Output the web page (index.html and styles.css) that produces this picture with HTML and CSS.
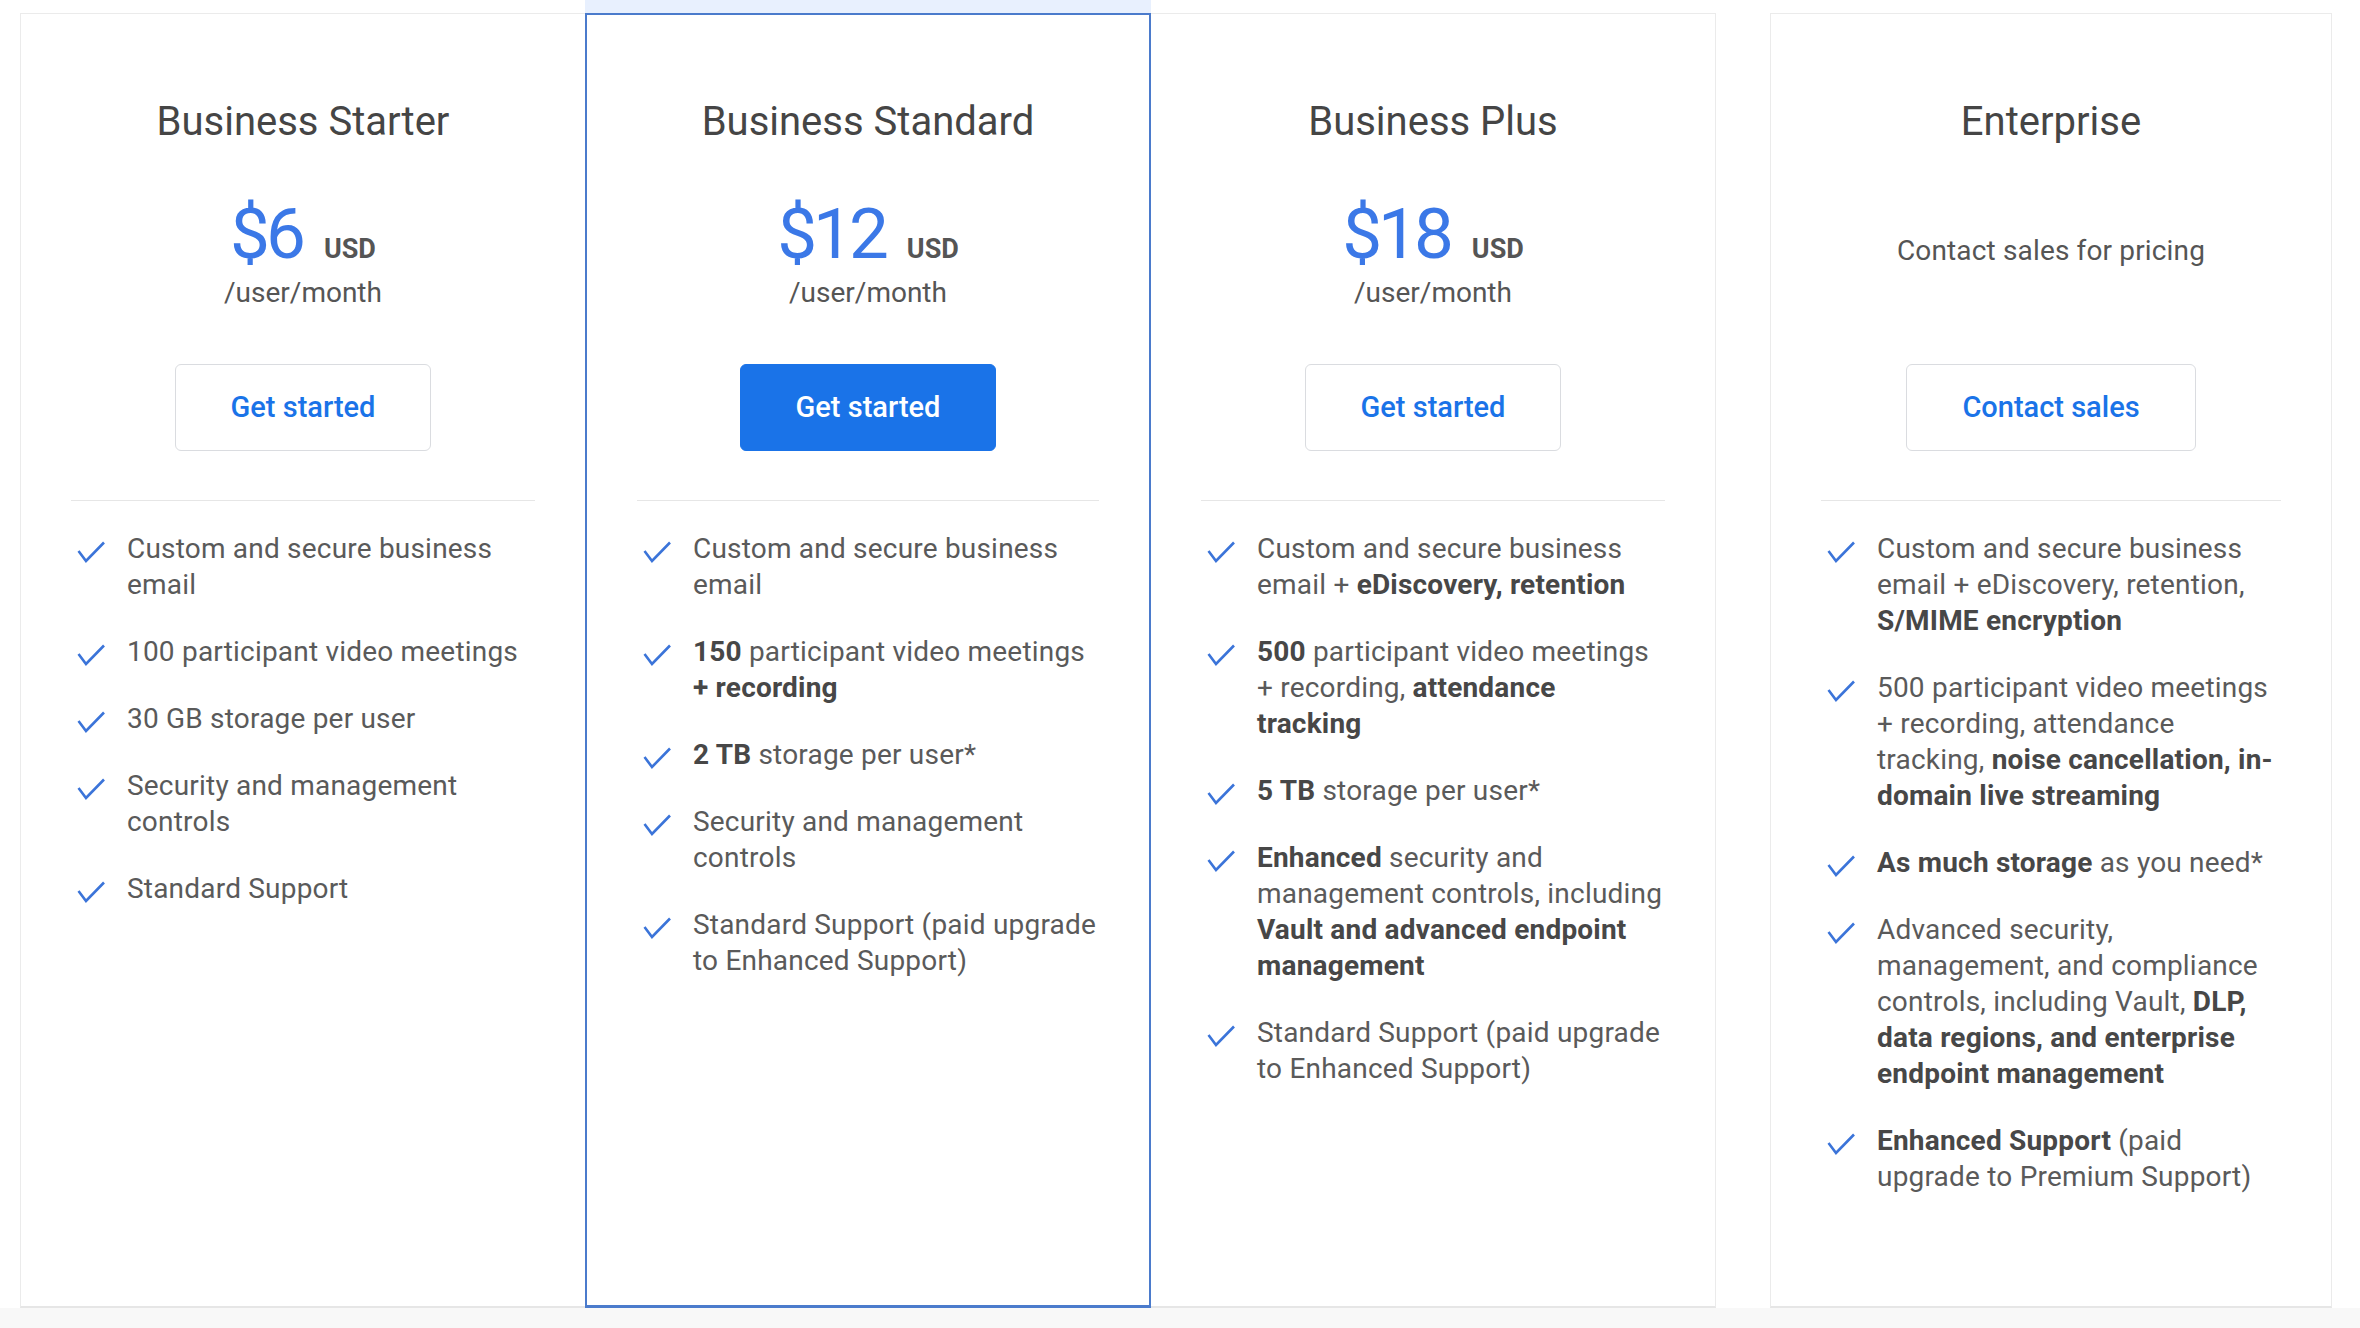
FILE: index.html
```html
<!DOCTYPE html>
<html lang="en">
<head>
  <meta charset="UTF-8">
  <title>Google Workspace plans</title>
  <link rel="stylesheet" href="styles.css">
</head>
<body>
  <div class="plans">

    <div class="plan">
      <div class="plan-head">
        <h3>Business Starter</h3>
        <div class="pricing">
          <div class="price"><span class="amount">$6</span><span class="currency">USD</span></div>
          <div class="per">/user/month</div>
        </div>
        <a class="btn" href="#">Get started</a>
      </div>
      <ul class="features">
        <li><svg class="check" viewBox="0 0 28 22"><polyline points="1.5,10 9,20 27,1.5"/></svg><span>Custom and secure business email</span></li>
        <li><svg class="check" viewBox="0 0 28 22"><polyline points="1.5,10 9,20 27,1.5"/></svg><span>100 participant video meetings</span></li>
        <li><svg class="check" viewBox="0 0 28 22"><polyline points="1.5,10 9,20 27,1.5"/></svg><span>30 GB storage per user</span></li>
        <li><svg class="check" viewBox="0 0 28 22"><polyline points="1.5,10 9,20 27,1.5"/></svg><span>Security and management controls</span></li>
        <li><svg class="check" viewBox="0 0 28 22"><polyline points="1.5,10 9,20 27,1.5"/></svg><span>Standard Support</span></li>
      </ul>
    </div>

    <div class="plan plan-featured">
      <div class="plan-head">
        <h3>Business Standard</h3>
        <div class="pricing">
          <div class="price"><span class="amount">$12</span><span class="currency">USD</span></div>
          <div class="per">/user/month</div>
        </div>
        <a class="btn btn-primary" href="#">Get started</a>
      </div>
      <ul class="features">
        <li><svg class="check" viewBox="0 0 28 22"><polyline points="1.5,10 9,20 27,1.5"/></svg><span>Custom and secure business email</span></li>
        <li><svg class="check" viewBox="0 0 28 22"><polyline points="1.5,10 9,20 27,1.5"/></svg><span><b>150</b> participant video meetings <b>+ recording</b></span></li>
        <li><svg class="check" viewBox="0 0 28 22"><polyline points="1.5,10 9,20 27,1.5"/></svg><span><b>2 TB</b> storage per user*</span></li>
        <li><svg class="check" viewBox="0 0 28 22"><polyline points="1.5,10 9,20 27,1.5"/></svg><span>Security and management controls</span></li>
        <li><svg class="check" viewBox="0 0 28 22"><polyline points="1.5,10 9,20 27,1.5"/></svg><span>Standard Support (paid upgrade to Enhanced Support)</span></li>
      </ul>
    </div>

    <div class="plan">
      <div class="plan-head">
        <h3>Business Plus</h3>
        <div class="pricing">
          <div class="price"><span class="amount">$18</span><span class="currency">USD</span></div>
          <div class="per">/user/month</div>
        </div>
        <a class="btn" href="#">Get started</a>
      </div>
      <ul class="features">
        <li><svg class="check" viewBox="0 0 28 22"><polyline points="1.5,10 9,20 27,1.5"/></svg><span>Custom and secure business email + <b>eDiscovery, retention</b></span></li>
        <li><svg class="check" viewBox="0 0 28 22"><polyline points="1.5,10 9,20 27,1.5"/></svg><span><b>500</b> participant video meetings + recording, <b>attendance tracking</b></span></li>
        <li><svg class="check" viewBox="0 0 28 22"><polyline points="1.5,10 9,20 27,1.5"/></svg><span><b>5 TB</b> storage per user*</span></li>
        <li><svg class="check" viewBox="0 0 28 22"><polyline points="1.5,10 9,20 27,1.5"/></svg><span><b>Enhanced</b> security and management controls, including <b>Vault and advanced endpoint management</b></span></li>
        <li><svg class="check" viewBox="0 0 28 22"><polyline points="1.5,10 9,20 27,1.5"/></svg><span>Standard Support (paid upgrade to Enhanced Support)</span></li>
      </ul>
    </div>

    <div class="plan plan-enterprise">
      <div class="plan-head">
        <h3>Enterprise</h3>
        <div class="pricing">
          <div class="note">Contact sales for pricing</div>
        </div>
        <a class="btn" href="#">Contact sales</a>
      </div>
      <ul class="features">
        <li><svg class="check" viewBox="0 0 28 22"><polyline points="1.5,10 9,20 27,1.5"/></svg><span>Custom and secure business email + eDiscovery, retention, <b>S/MIME encryption</b></span></li>
        <li><svg class="check" viewBox="0 0 28 22"><polyline points="1.5,10 9,20 27,1.5"/></svg><span>500 participant video meetings + recording, attendance tracking, <b>noise cancellation, in-domain live streaming</b></span></li>
        <li><svg class="check" viewBox="0 0 28 22"><polyline points="1.5,10 9,20 27,1.5"/></svg><span><b>As much storage</b> as you need*</span></li>
        <li><svg class="check" viewBox="0 0 28 22"><polyline points="1.5,10 9,20 27,1.5"/></svg><span>Advanced security, management, and compliance controls, including Vault, <b>DLP, data regions, and enterprise endpoint management</b></span></li>
        <li><svg class="check" viewBox="0 0 28 22"><polyline points="1.5,10 9,20 27,1.5"/></svg><span><b>Enhanced Support</b> (paid upgrade to Premium Support)</span></li>
      </ul>
    </div>

  </div>
</body>
</html>
```
FILE: styles.css
```css
* {
  box-sizing: border-box;
}

body {
  margin: 0;
  font-family: Roboto, "Liberation Sans", Arial, sans-serif;
  color: #5a5a5a;
  background: #f8f8f8;
  min-height: 100vh;
}

.plans {
  display: flex;
  align-items: stretch;
  height: 1308px;
  padding: 13px 0 0 20px;
  background: #ffffff;
}

.plan {
  width: 566px;
  background: #ffffff;
  border: 1px solid #ebebeb;
  border-bottom: 2px solid #e6e6e6;
}

.plan-featured {
  border: 2px solid #4b7bcc;
  border-bottom-width: 3px;
  box-shadow: 0 -13px 0 #e8f0fe;
  position: relative;
  z-index: 1;
  margin: 0 -1px;
}

.plan-enterprise {
  width: 562px;
  margin-left: 54px;
}

.plan-head {
  margin: 0 50px;
  padding: 84px 0 49px;
  text-align: center;
  border-bottom: 1px solid #e6e6e6;
}

.plan-featured .plan-head {
  padding-top: 83px;
}

h3 {
  margin: 0;
  font-size: 40px;
  line-height: 48px;
  font-weight: 400;
  color: #454545;
}

.pricing {
  height: 110px;
  margin: 55px 0 53px;
}

.price {
  display: flex;
  justify-content: center;
  align-items: baseline;
  height: 68px;
}

.amount {
  font-size: 71px;
  line-height: 66px;
  letter-spacing: -4px;
  color: #3b78e7;
}

.currency {
  font-size: 27px;
  line-height: 27px;
  font-weight: 700;
  color: #555;
  margin-left: 22px;
}

.per {
  margin-top: 6px;
  font-size: 28px;
  line-height: 36px;
  color: #555;
}

.note {
  padding-top: 32px;
  font-size: 28px;
  line-height: 36px;
  letter-spacing: 0.15px;
  color: #555;
}

.btn {
  display: inline-block;
  height: 87px;
  padding: 0 55px;
  line-height: 85px;
  font-size: 29px;
  font-weight: 500;
  color: #1a73e8;
  text-decoration: none;
  border: 1px solid #dadce0;
  border-radius: 6px;
  background: #ffffff;
}

.btn-primary {
  background: #1a73e8;
  border-color: #1a73e8;
  color: #ffffff;
}

.features {
  list-style: none;
  margin: 30px 50px 0 56px;
  padding: 0;
}

.features li {
  display: flex;
  gap: 22px;
  font-size: 28px;
  line-height: 36px;
  letter-spacing: 0.2px;
  margin-bottom: 31px;
}

.features b {
  font-weight: 700;
  color: #474747;
}

.check {
  flex: none;
  width: 28px;
  height: 22px;
  margin-top: 10px;
}

.check polyline {
  fill: none;
  stroke: #3b74d9;
  stroke-width: 2.6;
}
```
